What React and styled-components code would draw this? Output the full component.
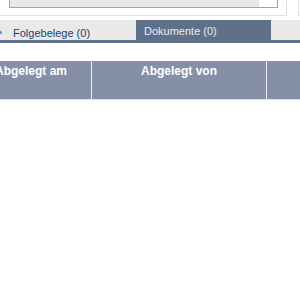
import styled, { createGlobalStyle } from "styled-components";

const GlobalStyle = createGlobalStyle`
  html, body {
    margin: 0;
    padding: 0;
    background: #ffffff;
    font-family: "Liberation Sans", Arial, sans-serif;
  }
`;

const Page = styled.div`
  width: 300px;
  height: 300px;
  overflow: hidden;
  background: #ffffff;
`;

const TopRow = styled.div`
  display: flex;
  height: 16px;
  gap: 11px;
`;

const Panel = styled.div`
  box-sizing: border-box;
  width: ${(p) => p.$width}px;
  flex-shrink: 0;
  height: 16px;
  border: 1px solid #dfe4ea;
  border-top: none;
  ${(p) => p.$noLeft && "border-left: none;"}
`;

const InputBox = styled.div`
  box-sizing: border-box;
  display: flex;
  margin-left: 9px;
  width: 269px;
  height: 8px;
  border: 1px solid #a2a2a2;
  border-top: none;
  background: #e8e8e8;
`;

const InputEnd = styled.div`
  margin-left: auto;
  width: 18px;
  background: #ffffff;
`;

const TabStrip = styled.div`
  display: flex;
  align-items: stretch;
  margin-top: 4px;
  height: 20px;
  background: #e9e9e9;
  border-bottom: 3px solid #5f7089;
`;

const Tab = styled.div`
  box-sizing: border-box;
  display: flex;
  align-items: ${(p) => (p.$active ? "flex-start" : "flex-end")};
  width: ${(p) => p.$width}px;
  padding: ${(p) => (p.$active ? "5px 0 0 8px" : "0 0 1px 13px")};
  font-size: 11px;
  color: ${(p) => (p.$active ? "#e8eef6" : "#1f3d70")};
  background: ${(p) => (p.$active ? "#5f7089" : "transparent")};
  position: relative;
`;

const Dot = styled.span`
  position: absolute;
  left: -1px;
  bottom: 6px;
  width: 3px;
  height: 3px;
  border-radius: 50%;
  background: #4a8fd0;
`;

const TableWrap = styled.div`
  margin-top: 18px;
  overflow: hidden;
`;

const HeaderRow = styled.div`
  display: flex;
  margin-left: -29px;
  height: 38px;
  background: #8590a8;
  border-bottom: 1px solid #dfe3ea;
`;

const HeaderCell = styled.div`
  box-sizing: border-box;
  flex-shrink: 0;
  width: ${(p) => p.$width}px;
  padding-top: 3px;
  text-align: center;
  font-size: 12px;
  font-weight: bold;
  color: #ffffff;
  border-right: 1px solid #eef1f5;
`;

export default function App() {
  return (
    <Page>
      <GlobalStyle />
      <TopRow>
        <Panel $width={287} $noLeft>
          <InputBox>
            <InputEnd />
          </InputBox>
        </Panel>
        <Panel $width={20} />
      </TopRow>
      <TabStrip>
        <Tab $width={136}>
          <Dot />
          Folgebelege (0)
        </Tab>
        <Tab $width={135} $active>
          Dokumente (0)
        </Tab>
      </TabStrip>
      <TableWrap>
        <HeaderRow>
          <HeaderCell $width={121}>Abgelegt am</HeaderCell>
          <HeaderCell $width={175}>Abgelegt von</HeaderCell>
          <HeaderCell $width={120}></HeaderCell>
        </HeaderRow>
      </TableWrap>
    </Page>
  );
}
